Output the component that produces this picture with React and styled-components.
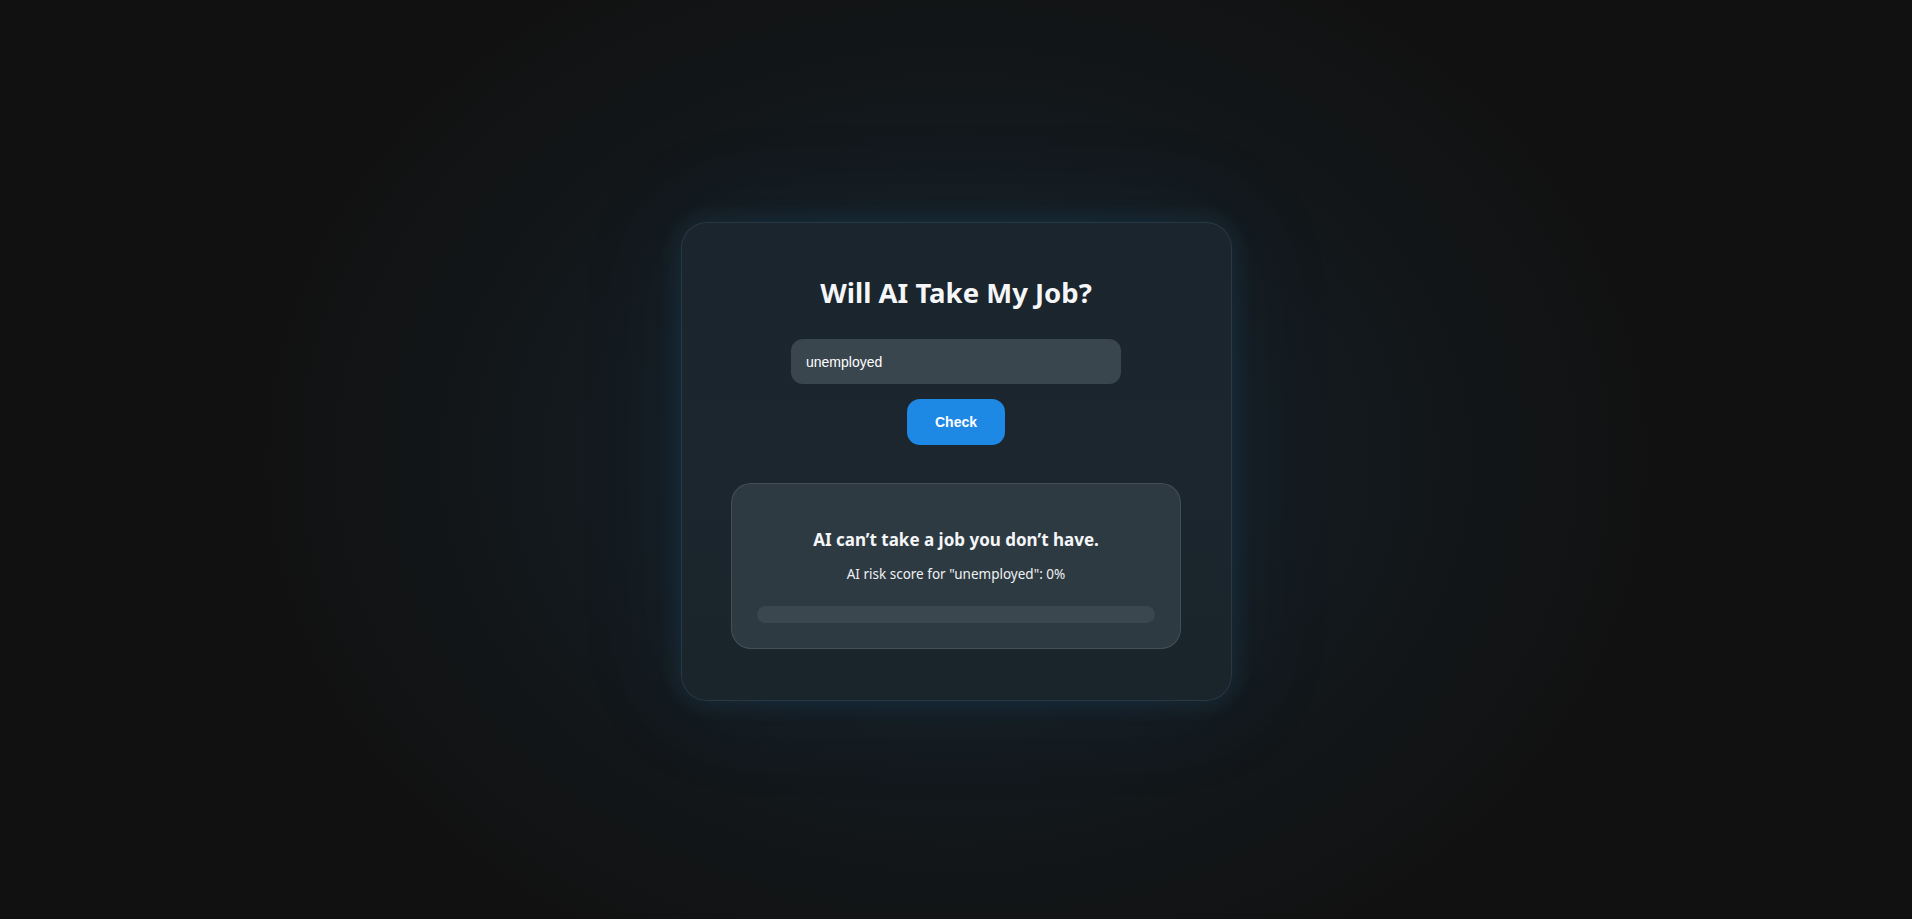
import React, { useState } from 'react';
import styled, { createGlobalStyle } from 'styled-components';

const GlobalStyle = createGlobalStyle`
  html, body {
    margin: 0;
    height: 100%;
    background: #111111;
  }
  #root {
    height: 100%;
  }
`;

const Page = styled.div`
  min-height: 100vh;
  display: flex;
  align-items: flex-start;
  justify-content: center;
  padding-top: 222px;
  box-sizing: border-box;
  background: radial-gradient(
    ellipse 700px 560px at 50% 50%,
    #17212a 0%,
    #141b20 45%,
    #111111 100%
  );
  font-family: 'Segoe UI', 'Noto Sans', sans-serif;
`;

const Card = styled.div`
  width: 551px;
  box-sizing: border-box;
  padding: 52px 50px 51px;
  display: flex;
  flex-direction: column;
  align-items: center;
  border-radius: 26px;
  border: 1px solid rgba(120, 160, 190, 0.16);
  background: linear-gradient(180deg, #1b252d 0%, #1b262e 55%, #1a242b 100%);
  box-shadow: 0 0 26px rgba(60, 150, 210, 0.16), 0 0 110px rgba(30, 100, 150, 0.12);
`;

const Title = styled.h1`
  margin: 0 0 28px;
  font-size: 27.5px;
  line-height: 36px;
  font-weight: 700;
  color: #f4f6f8;
`;

const Input = styled.input`
  width: 330px;
  height: 45px;
  box-sizing: border-box;
  padding: 0 15px;
  border: none;
  outline: none;
  border-radius: 12px;
  background: #3a464e;
  color: #ffffff;
  font-family: 'Liberation Sans', Arial, sans-serif;
  font-size: 14px;
`;

const Button = styled.button`
  margin-top: 15px;
  width: 98px;
  height: 46px;
  border: none;
  border-radius: 13px;
  background: #1e88e5;
  color: #ffffff;
  font-family: 'Liberation Sans', Arial, sans-serif;
  font-size: 14px;
  font-weight: 700;
  cursor: pointer;
`;

const Result = styled.div`
  margin-top: 38px;
  width: 450px;
  box-sizing: border-box;
  padding: 44px 25px 25px;
  display: flex;
  flex-direction: column;
  align-items: center;
  border-radius: 20px;
  border: 1px solid rgba(255, 255, 255, 0.1);
  background: #2e3a42;
`;

const Verdict = styled.h3`
  margin: 0;
  font-size: 17px;
  line-height: 24px;
  font-weight: 700;
  color: #f4f6f8;
`;

const Score = styled.p`
  margin: 13px 0 0;
  font-size: 13.5px;
  line-height: 18px;
  color: #eef1f3;
`;

const Track = styled.div`
  margin-top: 23px;
  width: 100%;
  height: 17px;
  border-radius: 9px;
  background: #3b474f;
  overflow: hidden;
`;

const Fill = styled.div`
  height: 100%;
  border-radius: 9px;
  background: #1e88e5;
`;

export default function App() {
  const [job, setJob] = useState('unemployed');
  const score = 0;

  return (
    <>
      <GlobalStyle />
      <Page>
        <Card>
          <Title>Will AI Take My Job?</Title>
          <Input value={job} onChange={(e) => setJob(e.target.value)} />
          <Button>Check</Button>
          <Result>
            <Verdict>AI can’t take a job you don’t have.</Verdict>
            <Score>AI risk score for "{job}": {score}%</Score>
            <Track>
              <Fill style={{ width: `${score}%` }} />
            </Track>
          </Result>
        </Card>
      </Page>
    </>
  );
}
